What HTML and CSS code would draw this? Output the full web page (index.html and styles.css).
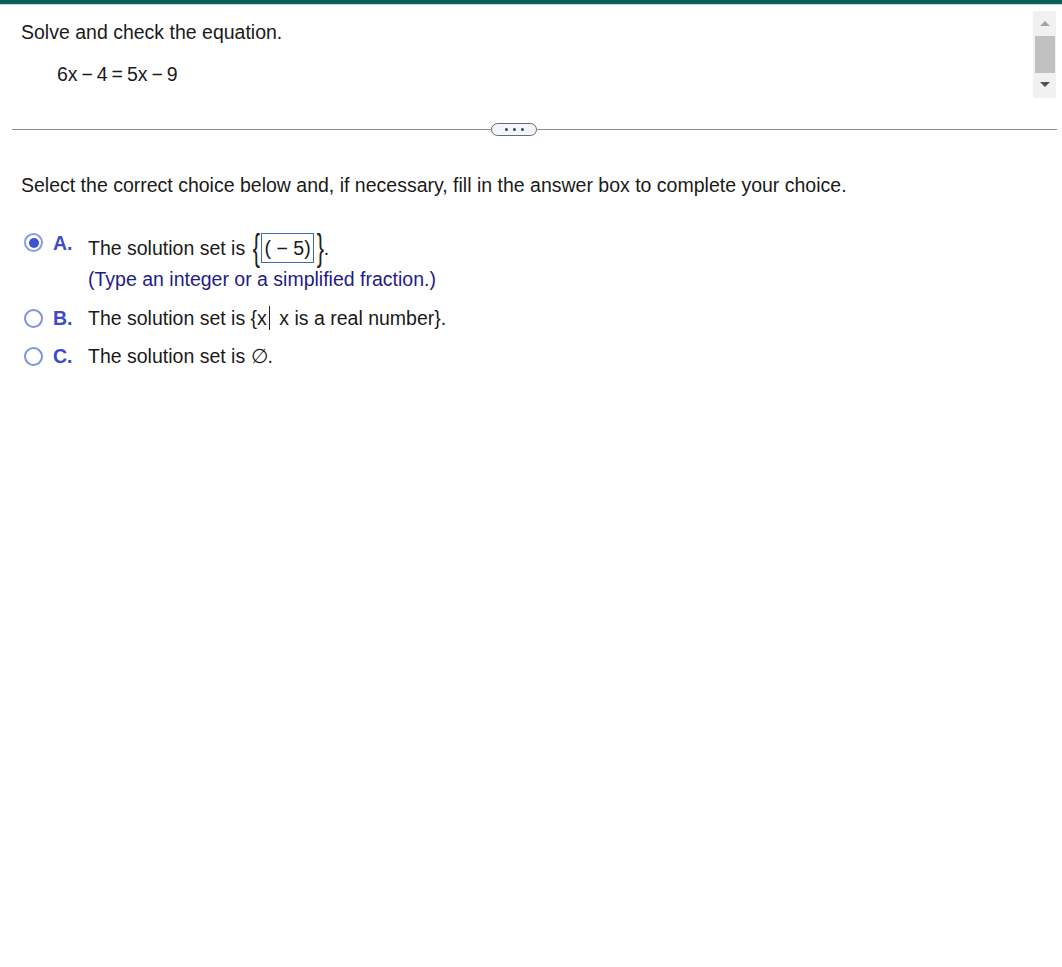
FILE: index.html
```html
<!DOCTYPE html>
<html>
<head>
<meta charset="utf-8">
<link rel="stylesheet" href="styles.css">
</head>
<body>
<div class="topbar"></div>
<div class="question">
  <div class="qtext">
    <p class="prompt">Solve and check the equation.</p>
    <p class="eq">6x − 4 = 5x − 9</p>
  </div>
  <div class="scrollbar">
    <div class="arrow up"></div>
    <div class="thumb"></div>
    <div class="arrow down"></div>
  </div>
</div>
<div class="divider">
  <div class="line left"></div>
  <div class="pill"><span></span><span></span><span></span></div>
  <div class="line"></div>
</div>
<p class="instruction">Select the correct choice below and, if necessary, fill in the answer box to complete your choice.</p>
<div class="choices">
  <div class="choice first">
    <span class="radio checked"></span>
    <span class="letter">A.</span>
    <div class="body">
      <div class="row tall">The solution set is <span class="brace">{</span><span class="answer">( − 5)</span><span class="brace">}</span>.</div>
      <div class="hint">(Type an integer or a simplified fraction.)</div>
    </div>
  </div>
  <div class="choice">
    <span class="radio"></span>
    <span class="letter">B.</span>
    <div class="body">
      <div class="row">The solution set is {x<span class="bar"></span> x is a real number}.</div>
    </div>
  </div>
  <div class="choice">
    <span class="radio"></span>
    <span class="letter">C.</span>
    <div class="body">
      <div class="row">The solution set is ∅.</div>
    </div>
  </div>
</div>
</body>
</html>
```
FILE: styles.css
```css
html, body {
  margin: 0;
  padding: 0;
  background: #fff;
}
body {
  font-family: "Liberation Sans", Arial, sans-serif;
  color: #1a1a1a;
  font-size: 19.5px;
}
.topbar {
  height: 4px;
  background: #0b5f56;
  border-bottom: 1px solid #c9d6e2;
}
.question {
  display: flex;
  justify-content: space-between;
  height: 94px;
  padding-right: 6px;
}
.qtext {
  padding-left: 21px;
}
.prompt {
  margin: 17px 0 0 0;
  line-height: 21px;
}
.eq {
  margin: 21px 0 0 36px;
  line-height: 21px;
  word-spacing: -1.5px;
}
.scrollbar {
  margin-top: 6px;
  width: 23px;
  height: 87px;
  background: #f1f1f1;
  display: flex;
  flex-direction: column;
  align-items: center;
}
.arrow {
  width: 0;
  height: 0;
  border-left: 5px solid transparent;
  border-right: 5px solid transparent;
}
.arrow.up {
  margin-top: 10px;
  border-bottom: 5px solid #a3a3a3;
}
.thumb {
  margin-top: 10px;
  width: 20px;
  height: 37px;
  background: #c1c1c1;
}
.arrow.down {
  margin-top: 9px;
  border-top: 5px solid #505050;
}
.divider {
  display: flex;
  align-items: center;
  margin: 23px 5px 0 12px;
  height: 14px;
}
.line {
  flex: 1;
  height: 1px;
  background: #8a8f96;
}
.line.left {
  flex: 0 0 479px;
}
.pill {
  width: 44px;
  height: 11px;
  border: 1px solid #5f6a77;
  border-radius: 7px;
  background: #f3f5f8;
  display: flex;
  justify-content: center;
  align-items: center;
  gap: 5px;
}
.pill span {
  width: 3px;
  height: 3px;
  background: #3c4550;
  border-radius: 50%;
}
.instruction {
  margin: 38px 0 0 21px;
  line-height: 22px;
}
.choices {
  margin-top: 37px;
  padding-left: 24px;
}
.choice {
  display: flex;
  align-items: flex-start;
  margin-bottom: 16px;
}
.choice.first {
  margin-bottom: 17px;
}
.radio {
  width: 19px;
  height: 19px;
  border: 2px solid #7f93e2;
  border-radius: 50%;
  box-sizing: border-box;
  margin-top: 1.5px;
  flex: none;
  position: relative;
}
.choice.first .radio {
  margin-top: 0;
  border-color: #8a9ae6;
}
.radio.checked::after {
  content: "";
  position: absolute;
  left: 2.5px;
  top: 2.5px;
  width: 10px;
  height: 10px;
  border-radius: 50%;
  background: #3d52d5;
}
.letter {
  width: 35px;
  margin-left: 10px;
  color: #3e4bc8;
  font-weight: bold;
  line-height: 22px;
  flex: none;
}
.choice.first .letter {
  margin-top: -1px;
}
.body {
  line-height: 22px;
}
.row {
  display: flex;
  align-items: center;
  white-space: pre;
  height: 22px;
}
.row.tall {
  height: 30px;
}
.brace {
  font-size: 36px;
  line-height: 30px;
  display: inline-block;
  width: 9px;
  text-align: center;
  transform: scaleX(0.6);
  color: #222;
}
.answer {
  border: 1px solid #3b6cc0;
  box-sizing: border-box;
  height: 30px;
  line-height: 28px;
  padding: 0 2px 0 3px;
  margin: 0 1px;
}
.hint {
  color: #1d1d85;
  margin-top: 5px;
}
.bar {
  display: inline-block;
  width: 1px;
  height: 24px;
  background: #222;
  margin: 0 4px 0 2px;
}
```
